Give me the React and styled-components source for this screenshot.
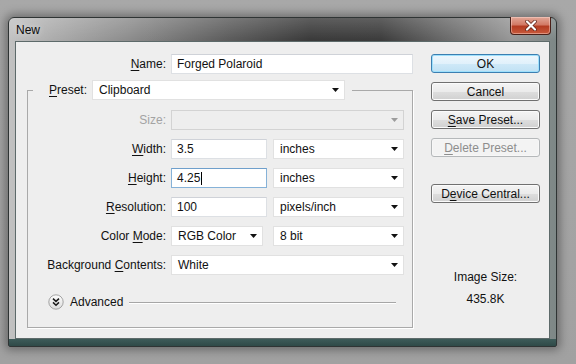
import React from 'react';
import styled, { createGlobalStyle } from 'styled-components';

const GlobalStyle = createGlobalStyle`
  html, body {
    margin: 0;
    padding: 0;
  }
  body {
    background: #a4a4a4;
    font-family: "Liberation Sans", Arial, sans-serif;
    font-size: 12px;
    color: #111;
  }
`;

const Desktop = styled.div`
  width: 576px;
  height: 364px;
  box-sizing: border-box;
  padding: 17px 0 0 8px;
  overflow: hidden;
  background: linear-gradient(180deg, #a8a8a8 0%, #a1a1a1 100%);
`;

const Window = styled.div`
  width: 549px;
  height: 330px;
  box-sizing: border-box;
  display: flex;
  flex-direction: column;
  padding: 0 6px 7px 6px;
  border: 1px solid #2f3434;
  border-radius: 6px 6px 2px 2px;
  background:
    linear-gradient(0deg, #2f4a48 0, #3e5b59 7px, transparent 7px),
    linear-gradient(180deg, rgba(255, 255, 255, 0.18) 0, rgba(255, 255, 255, 0) 22px),
    linear-gradient(90deg, #c2c2c2 0%, #acacac 8%, #8c8c8c 22%, #5c5c5c 40%, #3a3a3a 55%, #3c3c3c 68%, #6a6a6a 80%, #979797 92%, #7d8786 100%);
  box-shadow: 0 0 10px 3px rgba(0, 0, 0, 0.35);
`;

const TitleBar = styled.div`
  height: 23px;
  display: flex;
  align-items: flex-start;
  justify-content: space-between;
`;

const Title = styled.span`
  margin: 5px 0 0 1px;
  font-size: 12px;
  color: #0c0c0c;
  text-shadow: 0 0 6px rgba(255, 255, 255, 0.6);
`;

const CloseButton = styled.div`
  width: 41px;
  height: 18px;
  box-sizing: border-box;
  margin: -1px -1px 0 0;
  display: flex;
  align-items: center;
  justify-content: center;
  border: 1px solid #4a2018;
  border-top: none;
  border-radius: 0 0 4px 4px;
  background: linear-gradient(180deg, #e2a898 0%, #d27a66 45%, #b43c22 55%, #c85a3c 100%);
  box-shadow: inset 0 0 0 1px rgba(255, 220, 210, 0.45);
`;

const Client = styled.div`
  flex: 1;
  display: flex;
  box-sizing: border-box;
  padding: 12px 9px 0 11px;
  background: #eeeeee;
  border: 1px solid #5d6a6a;
`;

const LeftColumn = styled.div`
  width: 386px;
  display: flex;
  flex-direction: column;
`;

const RightColumn = styled.div`
  width: 109px;
  margin-left: 18px;
  display: flex;
  flex-direction: column;
`;

const NameRow = styled.div`
  display: grid;
  grid-template-columns: 139px 242px;
  column-gap: 5px;
  align-items: center;
`;

const Label = styled.span`
  text-align: right;
  white-space: nowrap;
  color: ${(p) => (p.$disabled ? '#a3a3a3' : '#111')};
`;

const Key = styled.span`
  text-decoration: underline;
  text-underline-offset: 2px;
`;

const TextBox = styled.div`
  box-sizing: border-box;
  width: ${(p) => (p.$w ? `${p.$w}px` : '100%')};
  height: 20px;
  display: flex;
  align-items: center;
  padding-left: 5px;
  background: #fff;
  border: 1px solid ${(p) => (p.$focused ? '#86b2d8' : '#dde0e4')};
  border-top-color: ${(p) => (p.$focused ? '#6f9fcb' : '#cfd2d8')};
  color: #111;
`;

const Caret = styled.span`
  display: inline-block;
  width: 1px;
  height: 13px;
  margin-left: 1px;
  background: #000;
`;

const Combo = styled.div`
  box-sizing: border-box;
  width: ${(p) => (p.$w ? `${p.$w}px` : '100%')};
  height: 20px;
  display: flex;
  align-items: center;
  justify-content: space-between;
  padding: 0 5px 0 6px;
  background: ${(p) => (p.$disabled ? '#eeeeee' : '#fff')};
  border: 1px solid ${(p) => (p.$disabled ? '#d3d3d3' : '#e1e1e1')};
  color: #111;
`;

const GroupBox = styled.fieldset`
  margin: 6px 0 0 0;
  padding: 0 8px 17px 0;
  min-width: 0;
  box-sizing: border-box;
  width: 386px;
  border: 1px solid #a9a9a9;
  box-shadow: 1px 1px 0 #ffffff;
`;

const Legend = styled.legend`
  margin-left: 5px;
  padding: 0 7px 0 16px;
  display: flex;
  align-items: center;
  gap: 5px;
`;

const FieldGrid = styled.div`
  margin-top: 10px;
  display: grid;
  grid-template-columns: 138px 233px;
  column-gap: 5px;
  row-gap: 9px;
  align-items: center;
`;

const Pair = styled.div`
  display: flex;
  justify-content: space-between;
`;

const AdvancedRow = styled.div`
  margin-top: 19px;
  padding-left: 20px;
  height: 16px;
  display: flex;
  align-items: center;
`;

const AdvancedText = styled.span`
  margin-left: 6px;
`;

const Rule = styled.div`
  flex: 1;
  height: 1px;
  margin: 1px 8px 0 6px;
  background: #a6a6a6;
  box-shadow: 0 1px 0 #ffffff;
`;

const Button = styled.div`
  box-sizing: border-box;
  height: 19px;
  margin-top: ${(p) => p.$top || 0}px;
  display: flex;
  align-items: center;
  justify-content: center;
  border-radius: 3px;
  white-space: nowrap;
  border: 1px solid ${(p) => (p.$default ? '#3c7fb1' : p.$disabled ? '#b5b8ba' : '#707070')};
  color: ${(p) => (p.$disabled ? '#8d8d8d' : '#111')};
  background: ${(p) =>
    p.$default
      ? 'linear-gradient(180deg, #eef7fd 0%, #e1f1fb 50%, #cfe9f8 51%, #c0e1f4 100%)'
      : p.$disabled
      ? '#f3f3f3'
      : 'linear-gradient(180deg, #f4f4f4 0%, #ebebeb 50%, #dedede 51%, #d0d0d0 100%)'};
  box-shadow: inset 0 0 0 1px ${(p) => (p.$default ? '#9ee0fc' : p.$disabled ? '#f7f7f7' : '#fbfbfb')};
`;

const SizeLabel = styled.div`
  margin-top: ${(p) => p.$top}px;
  line-height: 14px;
  text-align: center;
`;

const Arrow = ({ disabled }) => (
  <svg width="7" height="4" viewBox="0 0 7 4">
    <polygon points="0,0 7,0 3.5,4" fill={disabled ? '#9c9c9c' : '#111'} />
  </svg>
);

const Select = ({ value, w, disabled }) => (
  <Combo $w={w} $disabled={disabled}>
    <span>{value}</span>
    <Arrow disabled={disabled} />
  </Combo>
);

const AdvancedIcon = () => (
  <svg width="16" height="16" viewBox="0 0 16 16">
    <defs>
      <linearGradient id="adv" x1="0" y1="0" x2="0" y2="1">
        <stop offset="0" stopColor="#fdfdfd" />
        <stop offset="1" stopColor="#dcdcdc" />
      </linearGradient>
    </defs>
    <circle cx="8" cy="8" r="7.2" fill="url(#adv)" stroke="#9b9b9b" strokeWidth="0.9" />
    <path d="M5 4.6 L8 7.4 L11 4.6 M5 8.4 L8 11.2 L11 8.4" fill="none" stroke="#1a1a1a" strokeWidth="1.5" />
  </svg>
);

const CloseIcon = () => (
  <svg width="12" height="11" viewBox="0 0 12 11">
    <path d="M2 1.5 L10 9.5 M10 1.5 L2 9.5" stroke="#5a1f14" strokeWidth="3.6" strokeLinecap="round" />
    <path d="M2 1.5 L10 9.5 M10 1.5 L2 9.5" stroke="#ffffff" strokeWidth="2.2" strokeLinecap="round" />
  </svg>
);

const App = () => {
  return (
    <>
      <GlobalStyle />
      <Desktop>
        <Window>
          <TitleBar>
            <Title>New</Title>
            <CloseButton>
              <CloseIcon />
            </CloseButton>
          </TitleBar>
          <Client>
            <LeftColumn>
              <NameRow>
                <Label>
                  <Key>N</Key>ame:
                </Label>
                <TextBox>Forged Polaroid</TextBox>
              </NameRow>

              <GroupBox>
                <Legend>
                  <Label>
                    <Key>P</Key>reset:
                  </Label>
                  <Select value="Clipboard" w={253} />
                </Legend>

                <FieldGrid>
                  <Label $disabled>Size:</Label>
                  <Select value="" disabled />

                  <Label>
                    <Key>W</Key>idth:
                  </Label>
                  <Pair>
                    <TextBox $w={96}>3.5</TextBox>
                    <Select value="inches" w={131} />
                  </Pair>

                  <Label>
                    <Key>H</Key>eight:
                  </Label>
                  <Pair>
                    <TextBox $w={96} $focused>
                      4.25
                      <Caret />
                    </TextBox>
                    <Select value="inches" w={131} />
                  </Pair>

                  <Label>
                    <Key>R</Key>esolution:
                  </Label>
                  <Pair>
                    <TextBox $w={96}>100</TextBox>
                    <Select value="pixels/inch" w={131} />
                  </Pair>

                  <Label>
                    Color <Key>M</Key>ode:
                  </Label>
                  <Pair>
                    <Select value="RGB Color" w={92} />
                    <Select value="8 bit" w={131} />
                  </Pair>

                  <Label>
                    Background <Key>C</Key>ontents:
                  </Label>
                  <Select value="White" />
                </FieldGrid>

                <AdvancedRow>
                  <AdvancedIcon />
                  <AdvancedText>Advanced</AdvancedText>
                  <Rule />
                </AdvancedRow>
              </GroupBox>
            </LeftColumn>

            <RightColumn>
              <Button $default>OK</Button>
              <Button $top={9}>Cancel</Button>
              <Button $top={9}>
                <Key>S</Key>ave Preset...
              </Button>
              <Button $top={9} $disabled>
                <Key>D</Key>elete Preset...
              </Button>
              <Button $top={27}>
                D<Key>e</Key>vice Central...
              </Button>
              <SizeLabel $top={67}>Image Size:</SizeLabel>
              <SizeLabel $top={8}>435.8K</SizeLabel>
            </RightColumn>
          </Client>
        </Window>
      </Desktop>
    </>
  );
};

export default App;
